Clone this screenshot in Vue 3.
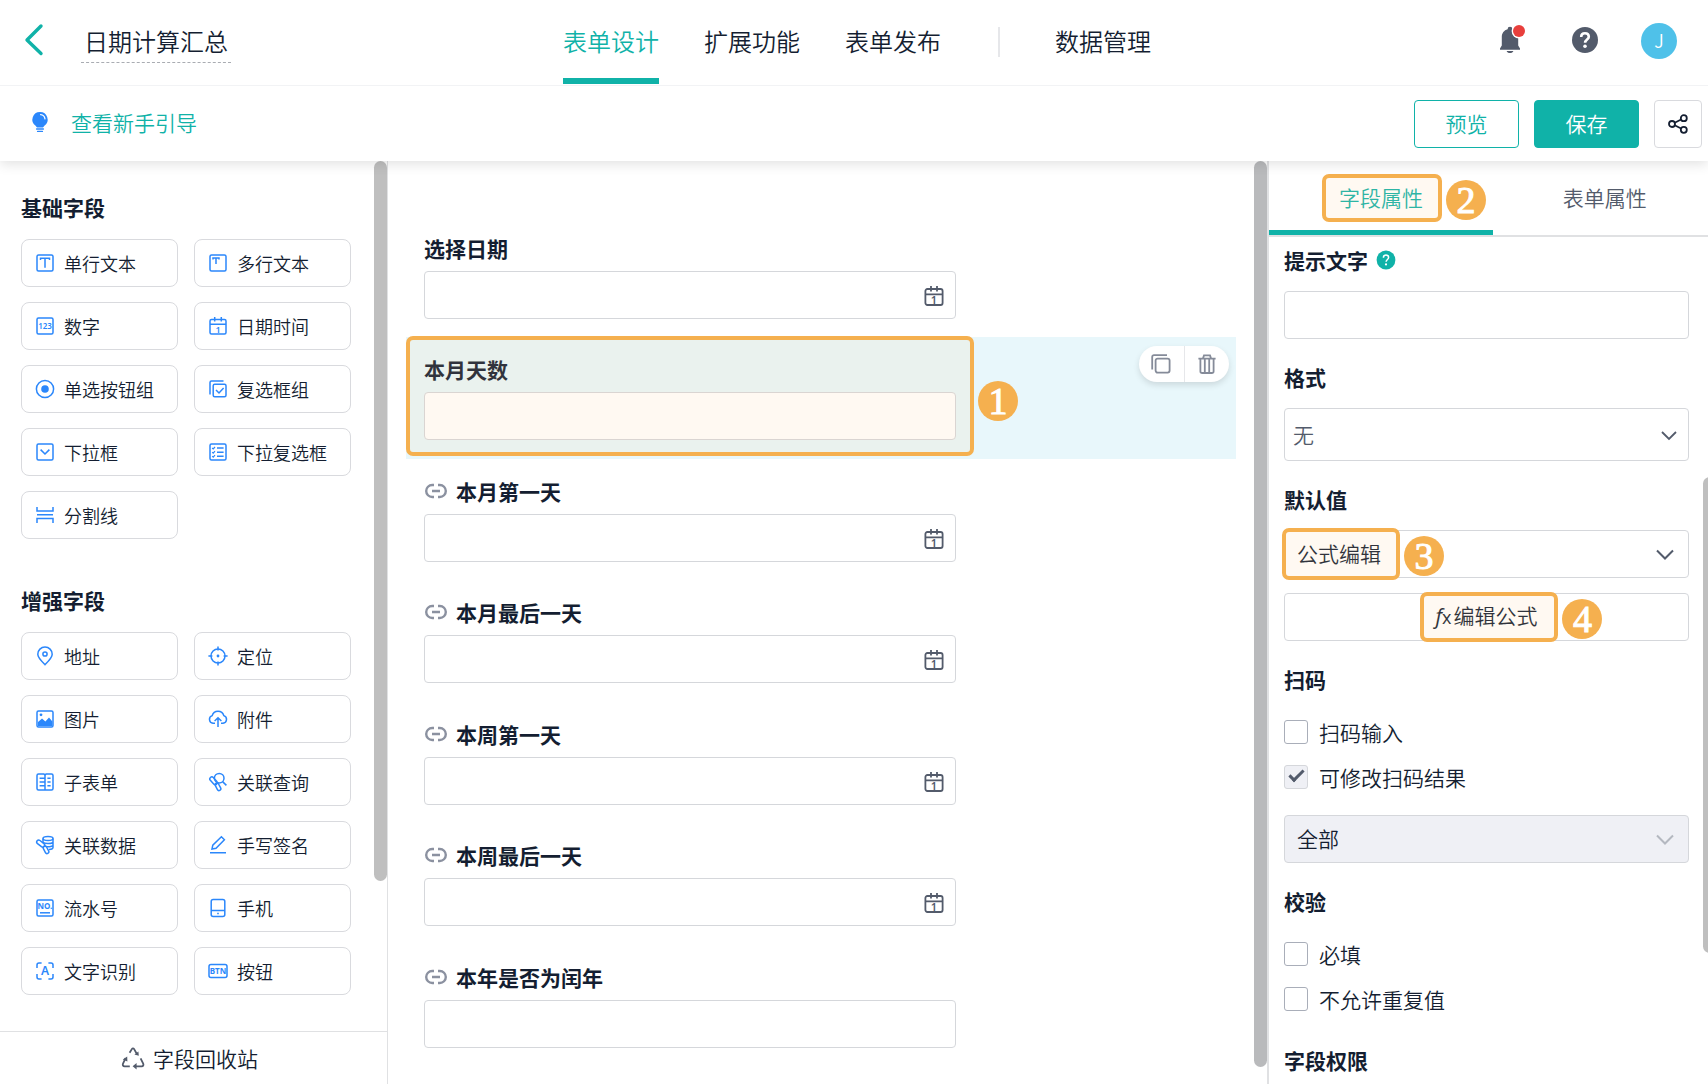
<script setup>
import { ref } from 'vue'

const blue = '#2b87fb'
const frame = '<rect x="2" y="2" width="16" height="16" rx="1.5"/>'

const icons = {
  text: frame + '<path d="M5.5 7V5.2h9V7M10 5.2v9.6"/>',
  textarea: frame + '<path d="M5 6.6V5h6v1.6M8 5v6"/>',
  number: frame + `<text x="10" y="13" text-anchor="middle" font-family="Noto Sans" font-size="8" font-weight="600" fill="${blue}" stroke="none">123</text>`,
  date: `<rect x="2" y="3.6" width="16" height="14.4" rx="1.5"/><path d="M2 8.3h16M6.7 1v4.6M13.3 1v4.6"/><text x="10" y="16.600" text-anchor="middle" font-family="Noto Sans" font-size="9" font-weight="600" fill="${blue}" stroke="none">1</text>`,
  radio: `<circle cx="10" cy="10" r="8.6"/><circle cx="10" cy="10" r="3.8" fill="${blue}" stroke="none"/>`,
  checkbox: '<rect x="5.2" y="5.2" width="12.8" height="12.6" rx="1.5"/><path d="M2 15.5V3.5A1.5 1.5 0 0 1 3.5 2h12M8 11l3 3 4.6-5"/>',
  select: frame + '<path d="M5.6 7.6l4.4 4.4 4.4-4.4"/>',
  multi: frame + '<path d="M9 6h6.6M9 10.2h6.6M9 14.2h6.6" /><path d="M4.2 6l1 1L7 5M4.2 10.2l1 1 1.8-2M4.2 14.2l1 1 1.8-2" stroke-width="1.2"/>',
  divider: '<path d="M2 2v4h16V2M2 18v-4.6h16V18M2 9.8h16"/>',
  pin: '<path d="M10 18.6C6 14.6 2.8 11.6 2.8 8.2a7.2 7.2 0 0 1 14.4 0c0 3.4-3.2 6.4-7.2 10.4z"/><circle cx="10" cy="8" r="2.1"/>',
  locate: `<circle cx="10" cy="10" r="7"/><path d="M10 .4v4M10 15.6v4M.4 10h4M15.6 10h4"/><circle cx="10" cy="10" r="1.4" fill="${blue}" stroke="none"/>`,
  image: `${frame}<path d="M3 16v-3l4-3.6 3.4 3.2L14 8.4l3.4 4V17H3z" fill="${blue}" stroke="none"/><circle cx="6" cy="5.8" r="1.4" fill="${blue}" stroke="none"/>`,
  upload: '<path d="M7 14.2H5a3.9 3.9 0 0 1-.8-7.6 6 6 0 0 1 11.6 0 3.9 3.9 0 0 1-.8 7.6h-2M10 18V9M6.6 12l3.4-3.2 3.4 3.2"/>',
  subform: '<path d="M9 2H3.500A1.500 1.500 0 0 0 2 3.500v13A1.500 1.500 0 0 0 3.500 18h13a1.500 1.500 0 0 0 1.500-1.500v-13A1.500 1.500 0 0 0 16.500 2H11l-1 1.200L9 2zM10 3v15M4.600 6.200H10M4.600 10H10M4.600 13.800H10M12.400 6.200h3.200M12.400 10h3.200M12.400 13.800h3.200"/>',
  query: '<circle cx="11.200" cy="6.200" r="4.800"/><path d="M14.600 9.600l3.800 3.800"/><rect x="1" y="6.800" width="9" height="4" rx="2" transform="rotate(48 5.500 8.800)"/><rect x="6" y="13" width="8" height="3.600" rx="1.800" transform="rotate(62 10 14.800)"/>',
  linkdata: '<ellipse cx="13" cy="3.600" rx="5" ry="2"/><path d="M8 3.600v3.600M18 3.600v9c0 1-1.800 1.900-4 2M8 7.200c1 1.600 8.600 2 10 0M10 11.400c2.600.8 7 .4 8-.8"/><rect x="1.200" y="6.600" width="9" height="4" rx="2" transform="rotate(38 5.700 8.600)"/><rect x="7" y="13" width="8" height="3.600" rx="1.800" transform="rotate(62 11 14.800)"/>',
  sign: '<path d="M2 17.800h16M4 14l.8-3.800 8.600-8.400 3 3L8 13.200z"/>',
  serial: `${frame}<path d="M5 14.800h10"/><text x="10" y="11.400" text-anchor="middle" font-family="Noto Sans" font-size="8" font-weight="700" fill="${blue}" stroke="none">NO.</text>`,
  phone: '<rect x="3.200" y="1.400" width="13.600" height="17.200" rx="2"/><path d="M3.200 12.600h13.600M9.200 15.600h1.600"/>',
  ocr: `<path d="M2 7V4a2 2 0 0 1 2-2h2.600M13.400 2H16a2 2 0 0 1 2 2v3M18 13v3a2 2 0 0 1-2 2h-2.600M6.600 18H4a2 2 0 0 1-2-2v-3"/><text x="10" y="14.400" text-anchor="middle" font-family="Noto Sans" font-size="12" font-weight="600" fill="${blue}" stroke="none">A</text>`,
  button: `<rect x="1" y="3.400" width="18" height="13" rx="2"/><text x="10" y="12.800" text-anchor="middle" font-family="Noto Sans" font-size="8" font-weight="700" fill="${blue}" stroke="none">BTN</text>`
}

const groups = [
  {
    title: '基础字段',
    items: [
      ['text', '单行文本'], ['textarea', '多行文本'],
      ['number', '数字'], ['date', '日期时间'],
      ['radio', '单选按钮组'], ['checkbox', '复选框组'],
      ['select', '下拉框'], ['multi', '下拉复选框'],
      ['divider', '分割线']
    ]
  },
  {
    title: '增强字段',
    items: [
      ['pin', '地址'], ['locate', '定位'],
      ['image', '图片'], ['upload', '附件'],
      ['subform', '子表单'], ['query', '关联查询'],
      ['linkdata', '关联数据'], ['sign', '手写签名'],
      ['serial', '流水号'], ['phone', '手机'],
      ['ocr', '文字识别'], ['button', '按钮']
    ]
  }
]

const fields = [
  { label: '选择日期', date: true },
  { label: '本月天数', active: true },
  { label: '本月第一天', date: true, linked: true },
  { label: '本月最后一天', date: true, linked: true },
  { label: '本周第一天', date: true, linked: true },
  { label: '本周最后一天', date: true, linked: true },
  { label: '本年是否为闰年', linked: true }
]

const scanInput = ref(false)
const required = ref(false)
const unique = ref(false)
</script>

<template>
  <div class="app">
    <header class="header">
      <div class="header-left">
        <button class="back" aria-label="返回">
          <svg width="20" height="34" viewBox="0 0 20 34" fill="none" stroke="#10b2a8" stroke-width="3.4" stroke-linecap="round" stroke-linejoin="round"><path d="M17 3L3 17l14 13.500" /></svg>
        </button>
        <h1 class="title">日期计算汇总</h1>
      </div>
      <nav class="nav">
        <a href="#design" class="active">表单设计</a>
        <a href="#extend">扩展功能</a>
        <a href="#publish">表单发布</a>
        <span class="nav-divider"></span>
        <a href="#data">数据管理</a>
      </nav>
      <div class="header-right">
        <button class="bell" aria-label="通知">
          <svg width="28" height="30" viewBox="0 0 28 30"><path d="M8.600 4.200a2.400 2.400 0 0 1 4.800 0c3.600 1 5.800 4 5.800 7.800v8.600l1.800 3v1.200H1v-1.200l1.800-3V12c0-3.800 2.200-6.800 5.800-7.800zM7.600 26h6.800c-.6 1.400-1.800 2-3.400 2s-2.800-.6-3.400-2z" fill="#535b6b" /><circle cx="20" cy="6" r="7.400" fill="#fff" /><circle cx="20" cy="6" r="6" fill="#e83f3c" /></svg>
        </button>
        <button class="help" aria-label="帮助">
          <svg width="28" height="28" viewBox="0 0 28 28" fill="none"><circle cx="14" cy="14" r="13" fill="#535b6b" /><path d="M10.200 11c0-2.400 1.600-3.800 3.800-3.800s3.800 1.400 3.800 3.500c0 2.700-3.700 2.800-3.700 6" stroke="#fff" stroke-width="2.600" /><circle cx="14" cy="20.200" r="1.800" fill="#fff" /></svg>
        </button>
        <span class="avatar">J</span>
      </div>
    </header>

    <div class="toolbar">
      <a href="#guide" class="guide">
        <svg width="18" height="22" viewBox="0 0 18 22"><path d="M9 1a7.600 7.600 0 0 0-4.400 13.800L6 16.400h6l1.400-1.600A7.600 7.600 0 0 0 9 1z" fill="#2b87fb" /><path d="M9.600 3.600a5 5 0 0 1 4.400 4.200" fill="none" stroke="#fff" stroke-width="1.200" stroke-linecap="round" /><path d="M5.600 18h6.800M6.600 20.400h4.800" stroke="#2b87fb" stroke-width="1.400" stroke-linecap="round" /></svg>
        <span>查看新手引导</span>
      </a>
      <div class="toolbar-actions">
        <button class="btn">预览</button>
        <button class="btn primary">保存</button>
        <button class="share" aria-label="分享">
          <svg width="20" height="20" viewBox="0 0 20 20" fill="none" stroke="#141e31" stroke-width="1.800"><circle cx="4" cy="10" r="3" /><circle cx="15.800" cy="4.200" r="3" /><circle cx="15.800" cy="15.800" r="3" /><path d="M6.700 8.700l6.400-3.200M6.700 11.300l6.400 3.200" /></svg>
        </button>
      </div>
    </div>

    <main class="workspace">
      <aside class="palette">
        <div class="palette-body">
          <section v-for="g in groups" :key="g.title" class="group">
            <h2>{{ g.title }}</h2>
            <div class="tiles">
              <button v-for="[icon, name] in g.items" :key="name" class="tile">
                <svg width="20" height="20" viewBox="0 0 20 20" fill="none" :stroke="blue" stroke-width="1.5" v-html="icons[icon]"></svg>
                <span>{{ name }}</span>
              </button>
            </div>
          </section>
        </div>
        <button class="recycle">
          <svg width="24" height="24" viewBox="0 0 24 24" fill="none" stroke="#535b6b" stroke-width="1.800"><path d="M8.600 6.800L11 2.900c.5-.8 1.500-.8 2 0l3 5.300M4.600 12.200l-2.600 5.400c-.6 1.400 0 2.800 1.600 2.800h5.200M19.600 12.400l2.600 5.200c.6 1.400 0 2.800-1.600 2.800H15" /><path d="M17.800 9.800l-4.400-1.200 4-3zM1.800 13.400l4.400-2.800.2 4.800zM15.600 17v6.400l-4-3.200z" fill="#535b6b" stroke="none" /></svg>
          <span>字段回收站</span>
        </button>
        <i class="thumb"></i>
      </aside>

      <section class="canvas">
        <div v-for="(f, i) in fields" :key="f.label" class="field" :class="{ selected: f.active }">
          <label :for="'field-' + i">
            <svg v-if="f.linked" width="24" height="18" viewBox="0 0 24 18" fill="none" stroke="#8b91a0" stroke-width="2.400"><path d="M10 3H8.200a6 6 0 0 0 0 12H10M14 3h1.800a6 6 0 0 1 0 12H14M8 9h8" /></svg>
            <span>{{ f.label }}</span>
          </label>
          <div class="control">
            <input :id="'field-' + i" type="text" />
            <svg v-if="f.date" width="20" height="22" viewBox="0 0 20 22" fill="none" stroke="#535b6b" stroke-width="1.800"><rect x="1.400" y="4" width="17.200" height="16" rx="2" /><path d="M1.400 9.400h17.200M7 1v5.600M13 1v5.600" /><text x="10" y="18.600" text-anchor="middle" font-family="Noto Sans" font-size="11" font-weight="600" fill="#535b6b" stroke="none">1</text></svg>
          </div>
          <template v-if="f.active">
            <div class="highlight mark-field"><b class="step">1</b></div>
            <div class="actions">
              <button aria-label="复制"><svg width="20" height="20" viewBox="0 0 20 20" fill="none" stroke="#858b99" stroke-width="1.800"><rect x="4.600" y="4.600" width="14" height="14" rx="2" /><path d="M1.200 15.400V3a1.800 1.800 0 0 1 1.800-1.800h13" /></svg></button>
              <button aria-label="删除"><svg width="18" height="20" viewBox="0 0 18 20" fill="none" stroke="#858b99" stroke-width="1.800"><path d="M.4 4.600h17.200M5 4.400l1-3h6l1 3M2.400 4.800v12.400A1.800 1.800 0 0 0 4.200 19h9.600a1.800 1.800 0 0 0 1.800-1.800V4.800M6.800 5v13.400M11.200 5v13.400" /></svg></button>
            </div>
          </template>
        </div>
        <i class="thumb"></i>
      </section>

      <aside class="props">
        <nav class="tabs">
          <a href="#field" class="active"><span>字段属性</span><i class="highlight mark-tab"><b class="step">2</b></i></a>
          <a href="#form"><span>表单属性</span></a>
        </nav>
        <div class="props-body">
          <section class="prop">
            <h3><label for="hint">提示文字</label>
              <svg width="20" height="20" viewBox="0 0 20 20" fill="none"><circle cx="10" cy="10" r="9.400" fill="#10b2a8" /><path d="M7.400 7.800c0-1.700 1.100-2.700 2.600-2.700s2.600 1 2.600 2.500c0 1.900-2.500 2-2.500 4.200" stroke="#fff" stroke-width="1.500" /><circle cx="10" cy="14.400" r="1.100" fill="#fff" /></svg>
            </h3>
            <div class="control"><input id="hint" type="text" /></div>
          </section>
          <section class="prop">
            <h3><label for="format">格式</label></h3>
            <div class="control tall">
              <select id="format"><option>无</option></select>
              <svg width="18" height="12" viewBox="0 0 18 12" fill="none" stroke="#535b6b" stroke-width="1.800"><path d="M2 2l7 7 7-7" /></svg>
            </div>
          </section>
          <section class="prop">
            <h3><label for="default">默认值</label></h3>
            <div class="control">
              <select id="default"><option>公式编辑</option></select>
              <svg width="18" height="12" viewBox="0 0 18 12" fill="none" stroke="#535b6b" stroke-width="2"><path d="M1 1.500l8 8 8-8" /></svg>
              <div class="highlight mark-default"><b class="step">3</b></div>
            </div>
            <button class="formula"><span class="formula-text"><i class="fx">f<small>x</small></i>编辑公式<i class="highlight mark-formula"><b class="step">4</b></i></span></button>
          </section>
          <section class="prop">
            <h3>扫码</h3>
            <label class="check"><input v-model="scanInput" type="checkbox" /><span>扫码输入</span></label>
            <label class="check"><input type="checkbox" checked disabled /><span>可修改扫码结果</span></label>
            <div class="control scan">
              <select aria-label="扫码范围" disabled><option>全部</option></select>
              <svg width="18" height="12" viewBox="0 0 18 12" fill="none" stroke="#b4b8c0" stroke-width="2"><path d="M1 1.500l8 8 8-8" /></svg>
            </div>
          </section>
          <section class="prop">
            <h3>校验</h3>
            <label class="check"><input v-model="required" type="checkbox" /><span>必填</span></label>
            <label class="check"><input v-model="unique" type="checkbox" /><span>不允许重复值</span></label>
          </section>
          <section class="prop">
            <h3>字段权限</h3>
          </section>
        </div>
        <i class="thumb"></i>
      </aside>
    </main>
  </div>
</template>

<style>
body {
  background: #fff;
}
</style>

<style scoped>
.app {
  display: flex;
  flex-direction: column;
  height: 100vh;
  overflow: hidden;
  color: #141e31;
  font-family: "Noto Sans CJK SC", sans-serif;
  font-size: 21px;
  font-weight: 350;
  line-height: 32px;
}
.app *,
.app *::before {
  box-sizing: border-box;
}
button,
input,
select {
  margin: 0;
  padding: 0;
  border: 0;
  background: none;
  color: inherit;
  font: inherit;
}
a {
  color: inherit;
  text-decoration: none;
}
h1,
h2,
h3 {
  margin: 0;
  font-size: inherit;
}
h2,
h3 {
  font-weight: 700;
}
svg {
  display: block;
  flex: none;
}

/* header */
.header {
  position: relative;
  z-index: 3;
  display: grid;
  grid-template-columns: 1fr auto 1fr;
  flex: none;
  height: 86px;
  border-bottom: 1px solid #f2f3f5;
  background: #fff;
  font-size: 24px;
}
.header-left {
  display: flex;
  align-items: center;
  padding-left: 24px;
}
.back {
  margin-right: 37px;
  padding-bottom: 5px;
}
.title {
  height: 42px;
  margin-bottom: 2px;
  padding: 0 3px;
  border-bottom: 1px dashed #a9acb2;
  font-weight: inherit;
  line-height: 40px;
}
.nav {
  display: flex;
  gap: 45px;
  margin-left: 6px;
}
.nav a {
  height: 84px;
  line-height: 81px;
}
.nav a.active {
  border-bottom: 6px solid #10b2a8;
  color: #10b2a8;
}
.nav-divider {
  width: 2px;
  height: 30px;
  margin: 27px 10px 0 12px;
  background: #e6e7ea;
}
.header-right {
  display: flex;
  align-items: center;
  justify-content: flex-end;
  padding: 0 31px 6px 0;
}
.help {
  margin: 0 42px 0 44px;
}
.avatar {
  width: 36px;
  height: 36px;
  margin-top: 2px;
  border-radius: 50%;
  background: #4fc1e9;
  color: #fff;
  font-size: 18px;
  line-height: 35px;
  text-align: center;
}

/* toolbar */
.toolbar {
  position: relative;
  z-index: 2;
  display: flex;
  align-items: center;
  justify-content: space-between;
  flex: none;
  height: 75px;
  padding: 0 6px 0 31px;
  background: #fff;
  box-shadow: 0 3px 12px rgba(0, 0, 0, 0.12);
}
.guide {
  display: flex;
  align-items: center;
  gap: 22px;
  padding-bottom: 3px;
  color: #10b2a8;
}
.toolbar-actions {
  display: flex;
  gap: 15px;
}
.btn {
  width: 105px;
  height: 48px;
  padding-bottom: 2px;
  border: 1px solid #10b2a8;
  border-radius: 4px;
  color: #10b2a8;
}
.btn.primary {
  background: #10b2a8;
  color: #fff;
}
.share {
  display: flex;
  align-items: center;
  justify-content: center;
  width: 48px;
  height: 48px;
  border: 1px solid #d9dade;
  border-radius: 4px;
}

/* columns */
.workspace {
  display: flex;
  flex: 1;
  min-height: 0;
}
.palette,
.canvas,
.props {
  position: relative;
  overflow: hidden;
}
.thumb {
  position: absolute;
  top: 0;
  right: 0;
  width: 13px;
  border-radius: 7px;
  background: #bfbfbf;
}

/* palette */
.palette {
  display: flex;
  flex-direction: column;
  flex: none;
  width: 388px;
  border-right: 1px solid #e0e1e3;
}
.palette .thumb {
  height: 78%;
}
.palette-body {
  flex: 1;
  min-height: 0;
  padding: 31px 36px 0 21px;
}
.group {
  margin-bottom: 46px;
}
.group h2 {
  margin-bottom: 17px;
  line-height: 30px;
}
.tiles {
  display: grid;
  grid-template-columns: 1fr 1fr;
  gap: 15px 16px;
}
.tile {
  display: flex;
  align-items: center;
  gap: 9px;
  height: 48px;
  padding: 0 13px;
  border: 1px solid #d9dade;
  border-radius: 8px;
  font-size: 18px;
  white-space: nowrap;
}
.recycle {
  display: flex;
  align-items: center;
  justify-content: center;
  gap: 8px;
  flex: none;
  height: 53px;
  padding-right: 8px;
  border-top: 1px solid #e0e1e3;
}

/* shared controls */
.control {
  position: relative;
  height: 48px;
}
.control input,
.control select {
  display: block;
  width: 100%;
  height: 100%;
  padding: 0 12px 2px;
  border: 1px solid #d5d7db;
  border-radius: 4px;
  background: #fff;
  appearance: none;
}
.control > svg {
  position: absolute;
  top: 2px;
  right: 12px;
  bottom: 0;
  margin: auto 0;
  pointer-events: none;
}

/* canvas */
.canvas {
  flex: 1;
  min-width: 0;
  padding: 55px 31px 0 18px;
  border-right: 2px solid #e0e1e3;
}
.canvas .thumb {
  bottom: 17px;
  background: #b9babc;
}
.field {
  position: relative;
  padding: 18px;
}
.field:nth-child(even) {
  padding-bottom: 19px;
}
.field label {
  display: flex;
  align-items: center;
  gap: 8px;
  margin-bottom: 9px;
  font-weight: 700;
  line-height: 28px;
}
.field .control {
  width: 67%;
}
.field.selected {
  background: #e8f7fb;
}
.actions {
  position: absolute;
  top: 9px;
  right: 7px;
  display: flex;
  width: 90px;
  height: 36px;
  border-radius: 18px;
  background: #fff;
  box-shadow: 0 3px 6px rgba(0, 0, 0, 0.12);
}
.actions button {
  display: flex;
  align-items: center;
  justify-content: center;
  flex: 1;
}
.actions button + button {
  border-left: 1px solid #e6e7ea;
}

/* step callouts */
.highlight {
  position: absolute;
  border: 4px solid #f5b04f;
  border-radius: 7px;
  background: rgba(255, 205, 145, 0.12);
  pointer-events: none;
}
.step {
  position: absolute;
  top: 50%;
  left: 100%;
  width: 40px;
  height: 40px;
  margin: -18px 0 0 8px;
  border-radius: 50%;
  background: #f5b04f;
  color: #fff;
  font: 400 38px/40px "Liberation Serif", serif;
  -webkit-text-stroke: 1px #fff;
  text-align: center;
}
.mark-field {
  top: -1px;
  bottom: 3px;
  left: 0;
  width: 568px;
}
.mark-field .step {
  margin-top: -15px;
}
.mark-tab {
  top: 13px;
  left: 50%;
  width: 120px;
  height: 48px;
  margin-left: -59px;
}
.mark-default {
  top: -2px;
  bottom: -2px;
  left: -2px;
  width: 118px;
}
.mark-formula {
  top: -7px;
  right: -21px;
  bottom: -9px;
  left: -16px;
}

/* properties */
.props {
  flex: none;
  width: 439px;
}
.tabs {
  display: flex;
  height: 76px;
  border-bottom: 2px solid #e0e1e3;
}
.tabs a {
  position: relative;
  flex: 0 0 51%;
  padding-top: 20px;
  color: #535b6b;
  text-align: center;
}
.tabs a.active {
  border-bottom: 5px solid #10b2a8;
  color: #10b2a8;
}
.props-body {
  padding: 9px 19px 0 15px;
}
.props .thumb {
  top: 316px;
  right: -8px;
  height: 476px;
}
.prop {
  margin-bottom: 24px;
}
.prop h3 {
  display: flex;
  align-items: center;
  gap: 8px;
  margin-bottom: 17px;
  line-height: 28px;
}
.prop .control > svg {
  right: 15px;
}
.prop .tall {
  height: 53px;
}
.prop .tall select {
  padding: 0 8px 2px;
  color: #535b6b;
}
.prop .tall > svg {
  right: 11px;
}
.formula {
  display: block;
  width: 100%;
  height: 48px;
  margin-top: 15px;
  padding-bottom: 2px;
  border: 1px solid #d5d7db;
  border-radius: 4px;
}
.formula-text {
  position: relative;
  display: inline-block;
}
.fx {
  margin-right: 2px;
  font-family: "Open Sans", sans-serif;
  font-weight: 400;
}
.fx small {
  font-size: 18px;
  font-style: normal;
}
.check {
  display: flex;
  align-items: center;
  gap: 11px;
  height: 45px;
  padding-bottom: 2px;
}
.check input {
  display: grid;
  place-items: center;
  width: 24px;
  height: 24px;
  border: 1px solid #a9aeb9;
  border-radius: 3px;
  appearance: none;
}
.check input:checked {
  border-color: #d5d7db;
  background: #eff0f5;
}
.check input:checked::before {
  width: 15px;
  height: 8px;
  margin-top: -5px;
  border: solid #535b6b;
  border-width: 0 0 3px 3px;
  transform: rotate(-45deg);
  content: "";
}
.scan {
  margin-top: 15px;
}
.scan select {
  background: #eff0f5;
  color: #141e31;
  opacity: 1;
}
</style>
